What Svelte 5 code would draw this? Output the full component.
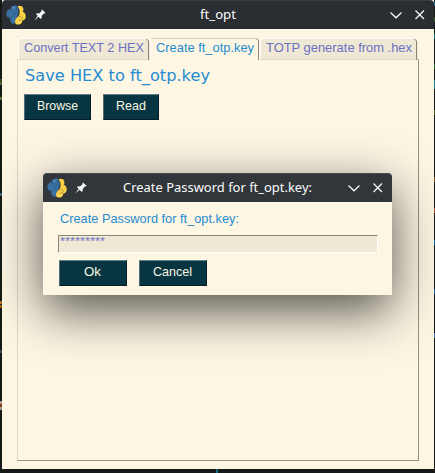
<script>
  const tabs = [
    { label: 'Convert TEXT 2 HEX', width: 132, text: 120 },
    { label: 'Create ft_otp.key', width: 110, text: 98, active: true },
    { label: 'TOTP generate from .hex', width: 158, text: 146 }
  ];
  const leftMarks = [[79, '#3d4a20'], [82, '#4b6131'], [97, '#62743a'], [193, '#3a6078'], [301, '#b07024'], [305, '#a05c13'], [350, '#424747'], [401, '#a3a194'], [404, '#883910'], [407, '#9c9a8c']];
  const rightMarks = [[1, '#126080'], [17, '#365520'], [34, '#176b80'], [64, '#286b30'], [80, '#1b8091'], [84, '#1b8091'], [110, '#54651c'], [177, '#874c1c'], [208, '#b04a2a'], [240, '#1768a4'], [289, '#2060a0'], [333, '#477fc4']];
</script>

{#snippet logo()}
  <svg class="logo" viewBox="0 0 20 20">
    <path d="M10.3 .6C7 .1 4.6 1.2 4.6 4.1C1.6 4.6 .3 6.4 .4 9C.5 11.7 1.8 13.1 4.4 13.4C4 15.9 4.6 17.9 7 18.7C9.1 19.2 10.3 17.8 10.3 15.8C10 13.3 11.7 11.4 12.2 8.7C12.8 5.5 12.7 2.6 10.3 .6Z" fill="#3971a3"/>
    <path d="M11.5 1.4C13.2 .1 16.4 .4 17.2 2.9C17.7 4.4 17.3 5.6 16.7 6.8C18.9 7.6 19.8 9.4 19.7 11.7C19.6 14.1 18.3 15.3 16.2 15.6C16.5 18 14.9 19.5 12.7 19.6C10.4 19.7 8.9 18.8 9 16.7C9.1 13.6 12.2 12.3 13.2 9.7C14.1 6.9 13.8 3.7 11.5 1.4Z" fill="#fbd345"/>
    <path d="M10.5 2.2C11.3 6.1 9.1 8.2 7.3 11.2M4.7 4C4.8 6 6.3 6.6 7.6 6M2.2 11.2Q3.8 13.4 5.6 12" fill="none" stroke="#285779" stroke-width=".8"/>
    <path d="M12.8 12Q15.2 10.2 16.5 12.7Q16 15.5 12.4 15.5" fill="none" stroke="#a58b3b" stroke-width=".8"/>
    <circle cx="7.5" cy="2.8" r=".6" fill="#bad2e1"/><circle cx="13" cy="17.7" r=".6" fill="#fff4c4"/>
  </svg>
{/snippet}

{#snippet pin()}
  <svg class="pin" viewBox="0 0 12 12"><path d="M8 .4 11.6 4 10.7 4.6 10 4.3 7.6 7 7.7 9.2 6.6 9.7 4.5 7.7.5 11.5 3.7 6.8 2.1 5.2 2.8 4.2 5 4.4 7.8 1.9 7.3 1.1Z" fill="#fcfcfc"/></svg>
{/snippet}

{#snippet controls()}
  <svg class="controls" viewBox="0 0 36 12"><path d="M1.5 3.5 7 8.8 12.5 3.5M26.5 1.5 35 10M35 1.5 26.5 10" fill="none" stroke="#fcfcfc" stroke-width="1.2"/></svg>
{/snippet}

{#snippet fit(text, width, size = 13.6, baseline = 13)}
  <svg class="fit" width={width} height="20"><text x="0" y={baseline} textLength={width} lengthAdjust="spacingAndGlyphs" font-size={size}>{text}</text></svg>
{/snippet}

<main>
  {#each leftMarks as [top, color]}<i class="mark left" style:top="{top}px" style:background={color}></i>{/each}
  {#each rightMarks as [top, color]}<i class="mark right" style:top="{top}px" style:background={color}></i>{/each}
  <i class="mark below"></i>

  <section class="window">
    <header>
      {@render logo()}{@render pin()}
      <h1>{@render fit('ft_opt', 36, 13.3, 14)}</h1>
      {@render controls()}
    </header>
    <div class="body">
      <nav>
        {#each tabs as tab}
          <div class="tab" class:active={tab.active} style:width="{tab.width}px">
            {@render fit(tab.label, tab.text)}
            <svg class="edge" width="4" height="22"><path d="M0 .5 2.5 3V22" fill="none" stroke="#8b8778"/></svg>
          </div>
        {/each}
      </nav>
      <div class="panel">
        <h2>{@render fit('Save HEX to ft_otp.key', 185, 16, 15)}</h2>
        <div class="buttons">
          <button>{@render fit('Browse', 41)}</button>
          <button class="read">{@render fit('Read', 30)}</button>
        </div>
      </div>
    </div>
  </section>

  <section class="dialog">
    <header>
      {@render logo()}{@render pin()}
      <h1>{@render fit('Create Password for ft_opt.key:', 189, 13.3, 14)}</h1>
      {@render controls()}
    </header>
    <div class="content">
      <label for="password">{@render fit('Create Password for ft_opt.key:', 179, 13.6, 14)}</label>
      <div class="input" id="password">{@render fit('*********', 45, 11)}</div>
      <div class="buttons">
        <button>{@render fit('Ok', 17)}</button>
        <button>{@render fit('Cancel', 39)}</button>
      </div>
    </div>
  </section>
</main>

<style>
  :global(body) { margin: 0; }
  * { box-sizing: border-box; }
  main { position: relative; width: 435px; height: 473px; overflow: hidden; background: #151a18; padding-left: 2px; font-family: "Liberation Sans", sans-serif; }
  svg { display: block; flex: none; }
  .fit { overflow: visible; }
  .fit text { fill: currentColor; }
  .mark { position: absolute; width: 2px; height: 3px; }
  .left { left: 0; }
  .right { left: 434px; width: 1px; height: 5px; }
  .below { left: 216px; top: 469px; height: 4px; background: #176584; }
  .window { width: 432px; height: 469px; background: #fdf6e3; }
  header { display: flex; align-items: center; background: #2a2e32; height: 29px; color: #fcfcfc; padding: 0 9px 0 4px; border-top: 1px solid #383d42; border-radius: 4px 4px 0 0; font-family: "Noto Sans", sans-serif; }
  .logo { width: 20px; height: 20px; }
  .pin { width: 12px; height: 12px; margin-left: 8px; }
  h1 { display: flex; justify-content: center; flex: 1; margin: 0; font-weight: 400; }
  .controls { width: 36px; height: 12px; }
  .body { padding: 9px 15px; }
  nav { display: flex; height: 21px; padding-left: 1px; }
  .tab { display: flex; position: relative; height: 21px; padding-left: 5px; color: #6c71c4; background: #eee8d5; border-top: 1px solid #fffefa; border-left: 1px solid #fffefa; border-radius: 3px 4px 0 0; }
  .tab.active { height: 22px; z-index: 1; background: #fdf6e3; color: #268bd2; border-color: #d8d1bf; border-left-color: #fffefa; }
  .edge { position: absolute; right: 0; top: -1px; }
  .panel { height: 402px; border: 1px solid #969080; border-left-color: #ded7c5; border-top-color: #ded7c5; padding: 6px; }
  h2 { margin: 0 0 8px 1px; height: 20px; color: #268bd2; font-weight: 400; font-family: "DejaVu Sans", sans-serif; }
  .buttons { display: flex; gap: 12px; }
  button { display: flex; justify-content: center; width: 68px; height: 26px; margin: 0; padding: 2px 0 0; color: #fdf6e3; background: #073642; border: 1px solid #021f28; border-top-color: #648087; border-left-color: #536f76; border-radius: 0; font: inherit; }
  .panel button { width: 67px; }
  .panel .read { width: 56px; }
  .dialog { position: absolute; left: 43px; top: 173px; width: 349px; height: 122px; background: #fdf6e3; border-radius: 4px 4px 0 0; box-shadow: 0 16px 50px rgba(0,0,0,.68); }
  .dialog header { background: #31363b; border-top-color: #454b50; }
  .dialog h1 { padding-left: 1px; }
  .content { padding: 7px 14px 0 15px; }
  label { display: block; margin-left: 2px; height: 26px; color: #268bd2; }
  .input { width: 320px; height: 18px; border: 1px solid #8b8778; border-right-color: #fffefa; border-bottom-color: #fffefa; background: #eee8d5; color: #6c71c4; padding-left: 1px; margin-bottom: 7px; }
  .input :global(svg) { margin-top: -4px; }
  .content .buttons { padding-left: 1px; }
  .content button { padding-right: 1px; }
</style>
